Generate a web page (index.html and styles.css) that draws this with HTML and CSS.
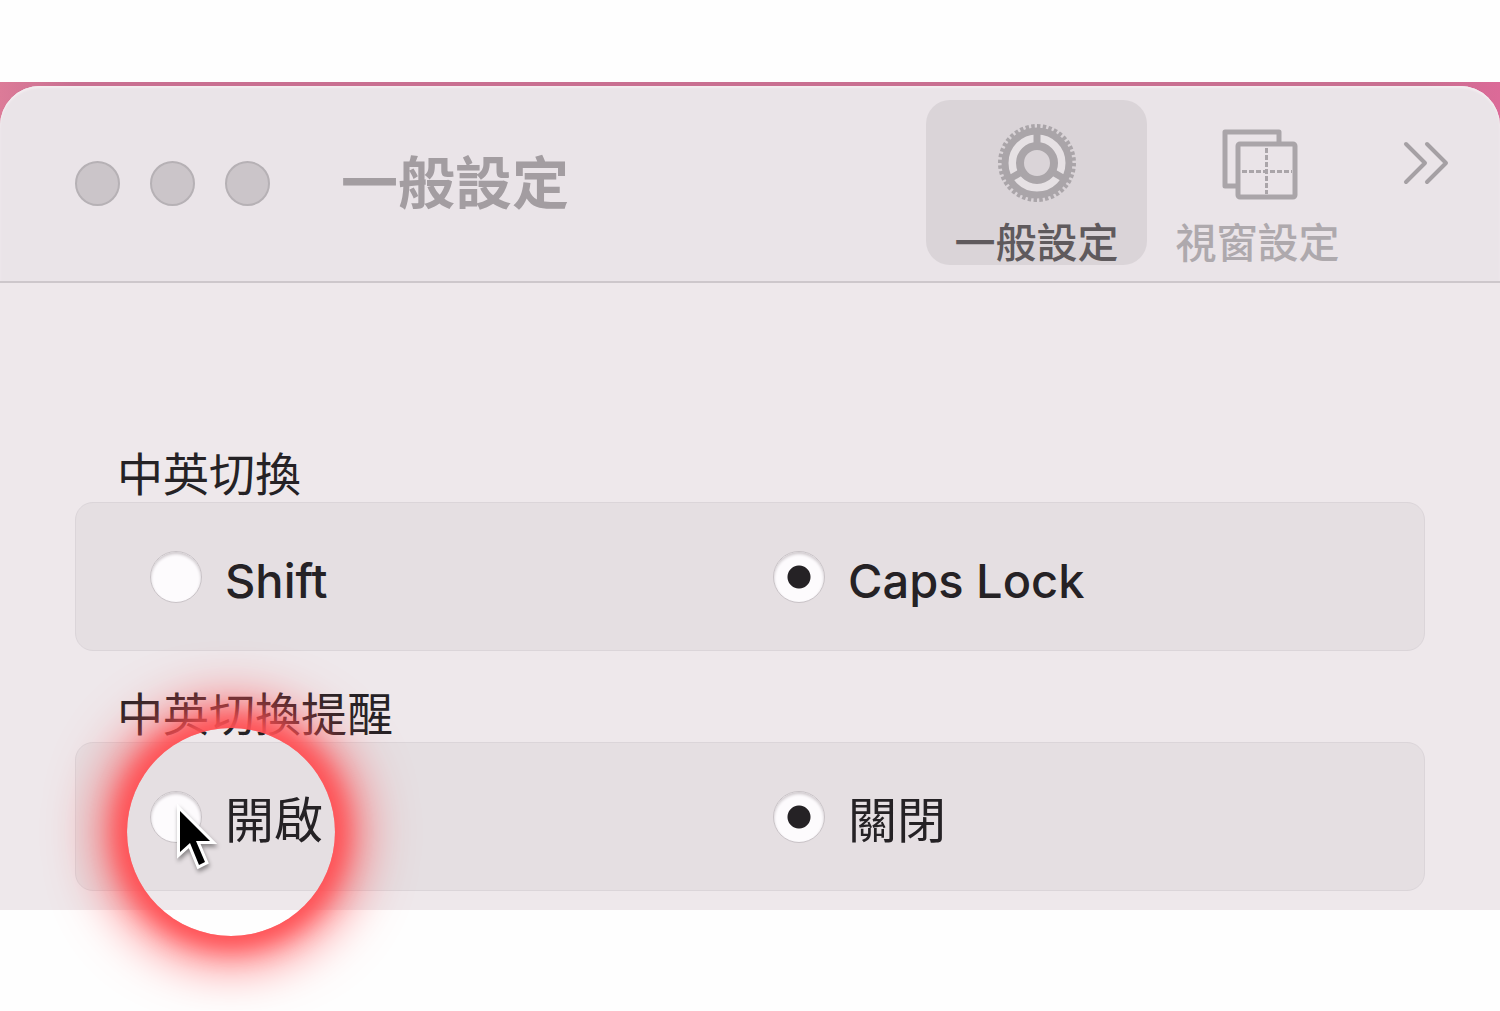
FILE: index.html
```html
<!DOCTYPE html>
<html lang="zh-Hant">
<head>
  <meta charset="UTF-8">
  <meta name="viewport" content="width=device-width, initial-scale=1.0">
  <title>一般設定</title>
  <link rel="stylesheet" href="styles.css">
</head>
<body>
  <div class="desktop">
    <main class="window">
      <!-- Title bar and tabs -->
      <header class="toolbar">
        <div class="lights">
          <button type="button" class="light" aria-label="Close"></button>
          <button type="button" class="light" aria-label="Minimize"></button>
          <button type="button" class="light" aria-label="Zoom"></button>
        </div>
        <h1 class="title">一般設定</h1>
        <nav class="tabs">
          <button type="button" class="tab active">
            <svg class="tab-icon" viewBox="0 0 80 80" fill="none" stroke="#aaa5a9" aria-hidden="true">
              <circle cx="40" cy="40" r="25" stroke="#e6e1e4" stroke-width="9"/>
              <circle cx="40" cy="40" r="36" stroke-width="6" pathLength="80" stroke-dasharray="1.2 0.8"/>
              <circle cx="40" cy="40" r="32" stroke-width="7"/>
              <circle cx="40" cy="40" r="17" stroke-width="8"/>
              <path d="M40 22V10M24.4 49L14 55M55.6 49L66 55" stroke-width="7"/>
            </svg>
            <span>一般設定</span>
          </button>
          <button type="button" class="tab">
            <svg class="tab-icon" viewBox="0 0 80 80" fill="none" stroke="#aaa5a9" stroke-width="5" stroke-linejoin="round" aria-hidden="true">
              <path d="M18 63H7V9H61V20"/>
              <rect x="20" y="21" width="57" height="53" rx="2"/>
              <path d="M48.500 25V71M24 48.500H74" stroke-width="3" stroke-dasharray="5 2"/>
            </svg>
            <span>視窗設定</span>
          </button>
        </nav>
        <button type="button" class="more" aria-label="More">
          <svg viewBox="0 0 48 44" fill="none" stroke="#a5a0a4" stroke-width="4" stroke-linecap="round" stroke-linejoin="round" aria-hidden="true">
            <path d="M4 3L23 22L4 41M25 3L44 22L25 41"/>
          </svg>
        </button>
      </header>

      <!-- Settings form -->
      <form class="settings">
        <fieldset class="group">
          <legend>中英切換</legend>
          <div class="box">
            <label class="option latin"><input type="radio" name="toggle"><span>Shift</span></label>
            <label class="option latin"><input type="radio" name="toggle" checked><span>Caps Lock</span></label>
          </div>
        </fieldset>
        <fieldset class="group">
          <legend>中英切換提醒</legend>
          <div class="box">
            <label class="option"><input type="radio" name="notify"><span>開啟</span></label>
            <label class="option"><input type="radio" name="notify" checked><span>關閉</span></label>
            <!-- Click highlight with the pointer -->
            <div class="spotlight">
              <svg class="pointer" viewBox="0 0 44 74" aria-hidden="true">
                <path d="M4 10V51L14 42L23 64L29 61L20 40H34Z" fill="#000" stroke="#fff" stroke-width="6" paint-order="stroke"/>
              </svg>
            </div>
          </div>
        </fieldset>
      </form>
    </main>
  </div>
</body>
</html>
```
FILE: styles.css
```css
body {
  margin: 0;
  padding: 82px 0 100px;
  background: #fefefe;
  color: #252225;
  font-family: Inter, "Noto Sans CJK TC", sans-serif;
  font-weight: 500;
}
button {
  padding: 0;
  border: none;
  background: none;
  font-family: inherit;
  font-weight: inherit;
}
.desktop {
  padding-top: 4px;
  background: linear-gradient(to right, #dc7b98, #c96f91 5%, #c96f91 95%, #dc6a98);
}
.window {
  background: #eee8eb;
  border-radius: 40px 40px 0 0;
}

/* toolbar */
.toolbar {
  display: flex;
  align-items: flex-start;
  height: 195px;
  padding: 0 36px 0 75px;
  border-bottom: 2px solid #cdc7cb;
  border-radius: 40px 40px 0 0;
  background: #eae4e8;
  box-shadow: inset 0 2px 2px #f4edf0;
}
.lights {
  display: flex;
  gap: 30px;
  align-self: center;
}
.light {
  width: 45px;
  height: 45px;
  border: 2px solid #b6b1b5;
  border-radius: 50%;
  background: #cbc5c9;
}
.title {
  align-self: center;
  flex: 1;
  margin: 0 0 0 71px;
  font-size: 57px;
  line-height: 80px;
  color: #a39da1;
}
.tabs {
  display: flex;
  padding-top: 14px;
}
.tab {
  display: flex;
  flex-direction: column;
  align-items: center;
  width: 221px;
  height: 165px;
  padding-top: 23px;
  border-radius: 24px;
  font-size: 41px;
  line-height: 80px;
  color: #aea9ad;
}
.tab.active {
  background: #dad4d8;
  color: #5f5a5d;
}
.tab-icon {
  width: 80px;
  height: 80px;
  flex: none;
}
.more {
  width: 76px;
  height: 128px;
  margin: 14px 0 0 20px;
}
.more svg {
  width: 48px;
  height: 44px;
}

/* settings */
.settings {
  display: flex;
  flex-direction: column;
  gap: 35px;
  padding: 163px 75px 19px;
}
.group {
  min-width: 0;
  margin: 0;
  padding: 0;
  border: none;
}
.group legend {
  padding: 0 0 0 42px;
  font-size: 46px;
  font-weight: 400;
  line-height: 56px;
}
.box {
  position: relative;
  display: grid;
  grid-template-columns: 1fr 1fr;
  padding: 48px 28px 47px 74px;
  border: 1px solid #dbd5d9;
  border-radius: 18px;
  background: #e5dfe2;
}
.option {
  display: flex;
  align-items: center;
  gap: 23px;
  height: 52px;
  font-size: 49px;
  font-weight: 400;
}
.option.latin {
  font-size: 47px;
  font-weight: 500;
}
.option span {
  padding-top: 8px;
  line-height: 52px;
}
.option input {
  appearance: none;
  width: 52px;
  height: 52px;
  margin: 0;
  border: 1px solid #c9c3c7;
  border-radius: 50%;
  background: #fdfbfd;
  box-shadow: inset 0 2px 3px #cfc9cd;
}
.option input:checked {
  background: radial-gradient(circle, #252225 11px, #fdfbfd 12px);
}

/* click highlight */
.spotlight {
  position: absolute;
  left: 51px;
  top: -15px;
  width: 208px;
  height: 208px;
  border-radius: 50%;
  box-shadow: 0 0 24px 10px #ff5054, 0 0 56px 22px #ff5054;
  pointer-events: none;
}
.pointer {
  position: absolute;
  left: 49px;
  top: 73px;
  width: 44px;
  height: 74px;
  filter: drop-shadow(1px 3px 2px #00000066);
}
```
